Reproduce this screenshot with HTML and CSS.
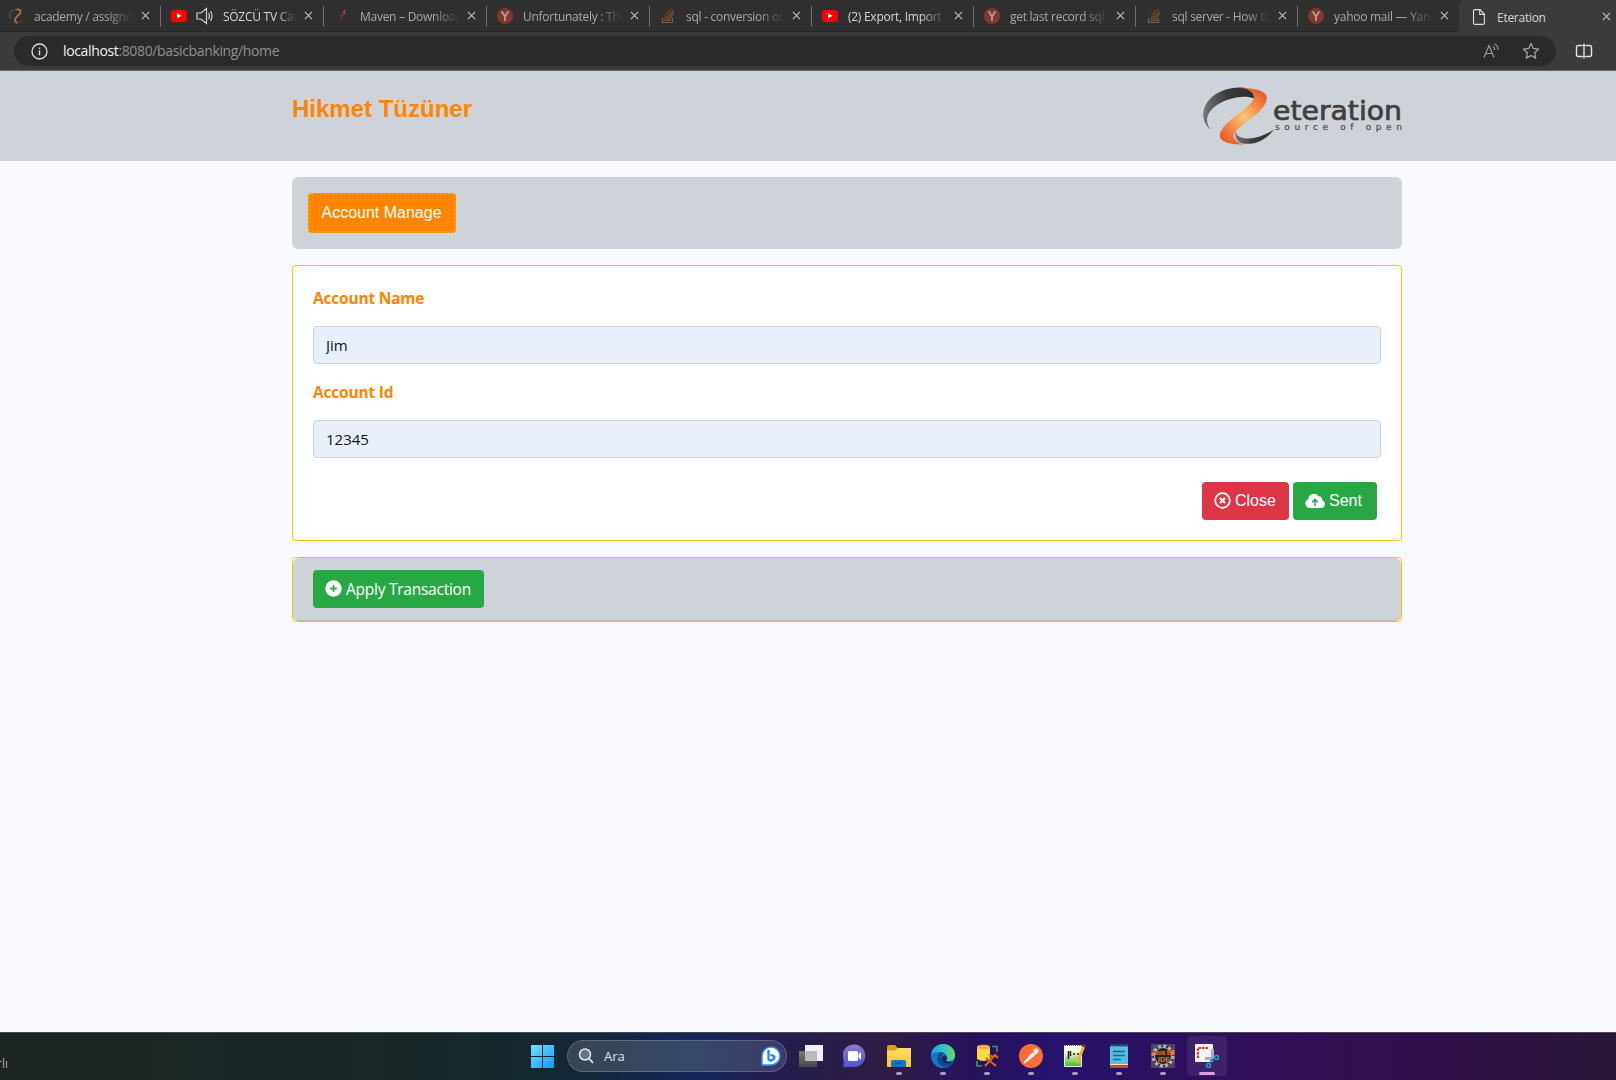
FILE: index.html
```html
<!DOCTYPE html>
<html lang="tr">
<head>
<meta charset="utf-8">
<title>Eteration</title>
<link rel="stylesheet" href="styles.css">
</head>
<body>
<svg class="defs" width="0" height="0" aria-hidden="true">
  <defs>
    <symbol id="close" viewBox="0 0 10 10"><path d="M1 1l8 8M9 1L1 9" fill="none" stroke="#c4c4c4" stroke-width="1.2"/></symbol>
    <symbol id="youtube" viewBox="0 0 16 16"><rect y="2" width="16" height="12" rx="3" fill="#f00"/><path d="M6 5.300v5l4.600-2.500z" fill="#fff"/></symbol>
    <symbol id="yandex" viewBox="0 0 16 16"><circle cx="8" cy="8" r="8" fill="#85352a"/><path d="M4.600 3.200l3.400 5.300v4.600M11.400 3.200L8 8.500" fill="none" stroke="#a89c9a" stroke-width="1.900"/></symbol>
    <symbol id="stack" viewBox="0 0 16 16"><path d="M2.500 10v4.500h10V10" fill="none" stroke="#666" stroke-width="1.200"/><path d="M4 12.500h7M4.100 10.300l6.900.8M4.700 7.700l6.600 2M6 5.100l6 3.600M8.200 2.600l4.600 5M11.500 .8l2 5.500" stroke="#8e4f20" stroke-width="1.100"/></symbol>
  </defs>
</svg>

<div class="browser">
  <div class="tabs">
    <div class="tab">
      <svg class="fav" viewBox="0 0 16 16"><path d="M10 1.500C3 1 0 5 2.500 10.500" fill="none" stroke="#505050" stroke-width="1.300"/><path d="M8.500 1.500C14 1 13.500 4.500 10 7.500 6.500 10.500 5.500 13 9.500 15" fill="none" stroke="#a96a47" stroke-width="2"/><path d="M9 14.800q4 0 6-2.500" fill="none" stroke="#4a4a4a"/></svg>
      <span class="title">academy / assignment</span><svg class="x"><use href="#close"/></svg>
    </div>
    <div class="tab bright">
      <svg class="fav"><use href="#youtube"/></svg>
      <svg class="speaker" viewBox="0 0 17 18"><path d="M1 6h4l5.500-4.500v15L5 12H1zM12.500 6q1.800 3 0 6M14.500 4q3 5 0 10" fill="none" stroke="#d0d0d0" stroke-width="1.200"/></svg>
      <span class="title">SÖZCÜ TV Canlı</span><svg class="x"><use href="#close"/></svg>
    </div>
    <div class="tab">
      <svg class="fav" viewBox="0 0 16 16"><path d="M5.300 13Q6 6 10.500 1.500 13 0 11.500 4 10 8.500 5.300 13" fill="#7a2342"/><path d="M8.500 4q2-2.500 3.800-3-.2 3-2 6z" fill="#99442c"/></svg>
      <span class="title">Maven – Download</span><svg class="x"><use href="#close"/></svg>
    </div>
    <div class="tab"><svg class="fav"><use href="#yandex"/></svg><span class="title">Unfortunately : The</span><svg class="x"><use href="#close"/></svg></div>
    <div class="tab"><svg class="fav"><use href="#stack"/></svg><span class="title">sql - conversion of a</span><svg class="x"><use href="#close"/></svg></div>
    <div class="tab bright"><svg class="fav"><use href="#youtube"/></svg><span class="title">(2) Export, Import &amp;</span><svg class="x"><use href="#close"/></svg></div>
    <div class="tab"><svg class="fav"><use href="#yandex"/></svg><span class="title">get last record sql</span><svg class="x"><use href="#close"/></svg></div>
    <div class="tab"><svg class="fav"><use href="#stack"/></svg><span class="title">sql server - How to</span><svg class="x"><use href="#close"/></svg></div>
    <div class="tab"><svg class="fav"><use href="#yandex"/></svg><span class="title">yahoo mail — Yandex</span><svg class="x"><use href="#close"/></svg></div>
    <div class="tab active">
      <svg class="fav" viewBox="0 0 16 16"><path d="M4 .6h5l4.400 4.400v8.900q0 1.500-1.500 1.500H4q-1.500 0-1.500-1.500V2.100Q2.500.6 4 .6zM8.700.8v4.600h4.500" fill="none" stroke="#ddd" stroke-width="1.100"/></svg>
      <span class="title">Eteration</span><svg class="x"><use href="#close"/></svg>
    </div>
  </div>
  <div class="toolbar">
    <div class="address">
      <svg width="17" height="17" viewBox="0 0 17 17"><circle cx="8.500" cy="8.500" r="7.500" fill="none" stroke="#ddd" stroke-width="1.300"/><path d="M8.500 7.300v5M8.500 4.500v1.400" stroke="#ddd" stroke-width="1.400"/></svg>
      <span class="url"><b>localhost</b>:8080/basicbanking/home</span>
      <svg class="aloud" width="17" height="16" viewBox="0 0 17 16"><path d="M1 14.500L6 2.500l5 12M2.800 10.500h6.500M9.800 3.500q2 1.200 2 3.500M11.300.8q4 2 3.600 6.200" fill="none" stroke="#999" stroke-width="1.200"/></svg>
      <svg width="18" height="18" viewBox="0 0 18 18"><path d="M9 1.500l2.300 4.900 5.300.7-3.900 3.700 1 5.300L9 13.500l-4.700 2.600 1-5.300L1.400 7.100l5.300-.7z" fill="none" stroke="#aaa" stroke-width="1.200" stroke-linejoin="round"/></svg>
    </div>
    <svg class="split" width="18" height="16" viewBox="0 0 18 16"><path d="M7 2.500H3.500Q1.500 2.500 1.500 4.500v7q0 2 2 2H7M11 2.500h3.500q2 0 2 2v7q0 2-2 2H11M9 .5v15" fill="none" stroke="#e4e4e4" stroke-width="1.400"/><path d="M7.200 2.500h3.600M7.200 13.500h3.600" stroke="#e4e4e4"/></svg>
  </div>
</div>

<main class="page">
  <header class="banner">
    <div class="container banner-row">
      <h1>Hikmet Tüzüner</h1>
      <svg class="logo" width="200" height="58" viewBox="0 0 200 58">
        <defs>
          <linearGradient id="dark" x1="0" x2="1"><stop offset="0" stop-color="#777"/><stop offset=".45" stop-color="#3c3b3d"/><stop offset="1" stop-color="#2c2a2c"/></linearGradient>
          <radialGradient id="flame" gradientUnits="userSpaceOnUse" cx="42" cy="30" r="30"><stop offset="0" stop-color="#fdca7a"/><stop offset=".5" stop-color="#f5904c"/><stop offset="1" stop-color="#e95d2b"/></radialGradient>
        </defs>
        <path d="M8.500 43C-2 33-1 19 11 9 24-1 46-2 51 5q1.500 2.500 1 6.500C43 7 22 11 11 21 3 29 4 36 8.500 43z" fill="url(#dark)"/>
        <path d="M39 1C58 1 68 6 64 15 60 25 49 31 38 40q-8 6-6 11 2 4 10 6.500C24 58 14 53 19 44 24 34 37 28 46 19q8-7 5-12Q48 2 39 1z" fill="url(#flame)"/>
        <path d="M34 43q-1 6 7 8c9 2 21-2 31-8.500C63 54 50 59 39 56q-8-4-5-13z" fill="url(#dark)"/>
        <text class="wordmark" x="71" y="33" textLength="129" lengthAdjust="spacingAndGlyphs">eteration</text>
        <text class="tagline" x="73" y="42.500" textLength="127">source of open</text>
      </svg>
    </div>
  </header>

  <div class="container">
    <nav class="menu"><button class="manage">Account Manage</button></nav>

    <form class="panel">
      <label for="name">Account Name</label>
      <input id="name" value="Jim">
      <label for="acc">Account Id</label>
      <input id="acc" value="12345">
      <div class="actions">
        <button type="button" class="btn red"><svg width="17" height="17" viewBox="0 0 17 17"><circle cx="8.500" cy="8.500" r="7.300" fill="none" stroke="#fff" stroke-width="1.800"/><path d="M6 6l5 5M11 6l-5 5" stroke="#fff" stroke-width="2"/></svg>Close</button>
        <button type="button" class="btn green"><svg width="20" height="16" viewBox="0 0 20 16"><path d="M5 15a4.500 4.500 0 0 1-1.700-8.700A5.600 5.600 0 0 1 13.500 3.200a3.200 3.200 0 0 1 3.600 4A4 4 0 0 1 16 15z" fill="#fff"/><path d="M10 13V7M7.200 9.200L10 6.400l2.800 2.800" fill="none" stroke="#28a745" stroke-width="1.500"/></svg>Sent</button>
      </div>
    </form>

    <section class="apply">
      <div class="apply-body">
        <button class="btn green segoe"><svg width="17" height="17" viewBox="0 0 17 17"><circle cx="8.500" cy="8.500" r="8.200" fill="#fff"/><path d="M8.500 5.300v6.400M5.300 8.500h6.400" stroke="#28a745" stroke-width="1.800"/></svg><span>Apply Transaction</span></button>
      </div>
    </section>
  </div>
</main>

<footer class="taskbar">
  <span class="weather">rlı</span>
  <svg class="start" width="23" height="23" viewBox="0 0 23 23"><defs><linearGradient id="win" x1="0" y1="0" x2="1" y2="1"><stop stop-color="#7bdcff"/><stop offset="1" stop-color="#0f9cfb"/></linearGradient></defs><path d="M0 0h11v11H0zM12 0h11v11H12zM0 12h11v11H0zM12 12h11v11H12z" fill="url(#win)"/></svg>
  <div class="search">
    <svg width="16" height="16" viewBox="0 0 16 16"><circle cx="7" cy="6.500" r="5.500" fill="#64748b" stroke="#e6e9ed" stroke-width="1.500"/><path d="M11 10.500l4 4.300" stroke="#e6e9ed" stroke-width="1.700"/></svg>
    <span>Ara</span>
    <svg width="20" height="20" viewBox="0 0 20 20"><path d="M1 19V10a9 9 0 1 1 9 9z" fill="#fff" stroke="#2593ec" stroke-width="1.500"/><path d="M7.500 4v9.500l2.200 1.200 3.600-2.200v-2L9.500 8.700" fill="none" stroke="#168ce2" stroke-width="2.300"/></svg>
  </div>
  <div class="apps">
    <div class="app"><svg viewBox="0 0 24 24"><defs><linearGradient id="tv" x2="0" y2="1"><stop stop-color="#777"/><stop offset="1" stop-color="#484848"/></linearGradient></defs><path d="M6 1h18v16H6z" fill="#f0f0f0"/><path d="M0 7h18v16H0z" fill="url(#tv)"/><path d="M6 7h12v10H6z" fill="#bbb"/></svg></div>
    <div class="app"><svg viewBox="0 0 24 24"><defs><linearGradient id="chat" x2="0" y2="1"><stop stop-color="#8e7bc7"/><stop offset="1" stop-color="#4e55ce"/></linearGradient></defs><path d="M0 23l1-6A11.300 11.300 0 1 1 11 23z" fill="url(#chat)"/><rect x="5" y="7" width="10" height="10" rx="1.500" fill="#fff"/><path d="M15.500 10.500L18 8v8l-2.500-2.500z" fill="#fff"/></svg></div>
    <div class="app run"><svg viewBox="0 0 24 24"><defs><linearGradient id="fold" x2="0" y2="1"><stop stop-color="#ffdc6a"/><stop offset="1" stop-color="#fcc22e"/></linearGradient></defs><path d="M0 3q0-2 2-2h6l2.500 3H23v6H0z" fill="#dba008"/><path d="M0 6.500h8L11 4h13v19H0z" fill="url(#fold)"/><path d="M4 23v-5q0-2 2-2h11q2 0 2 2v5z" fill="#1377c5"/><path d="M8 19h7" stroke="#0b5a9e" stroke-width="1.500"/></svg></div>
    <div class="app run"><svg viewBox="0 0 24 24"><defs><linearGradient id="edge1"><stop stop-color="#249fe0"/><stop offset=".6" stop-color="#34c7c2"/><stop offset="1" stop-color="#69dc5b"/></linearGradient></defs><circle cx="12" cy="12" r="12" fill="#1476c7"/><path d="M0 11C1 4 6 0 12 0c8 0 12 6 12 11s-4 6-7 6-3-2-2-3c1-3-1-6-6-6-4 0-8 1-9 3z" fill="url(#edge1)"/><path d="M10 8c-4 2-5 9-1 13 3 3 9 2 13-2-5 2-12 0-11-7 0-2 1-2 2-3z" fill="#0d4b93"/><path d="M15 11q3 6-1 5 5 4 9.500 0-2 3-4 3.500-8 1-8.500-5 0-3 4-3.500z" fill="#26205f"/></svg></div>
    <div class="app run"><svg viewBox="0 0 24 24"><path d="M17 2.500h5V8M2 17v5h5" fill="none" stroke="#3f9a52" stroke-width="1.700"/><path d="M2 3v12q6 4 13 0V3z" fill="#f8d946"/><ellipse cx="8.500" cy="3" rx="6.500" ry="2.300" fill="#f4a958"/><path d="M10 22l9-10M11 14l10 8M14 11l4 2 2-2 3 3" fill="none" stroke="#d8651c" stroke-width="2.200"/></svg></div>
    <div class="app run"><svg viewBox="0 0 24 24"><circle cx="12" cy="12" r="12" fill="#ff6c37"/><path d="M5 19l5-4 7-6M6 18l8-9" stroke="#fff" stroke-width="1.700" fill="none"/><circle cx="17" cy="7" r="2.500" fill="#fff"/></svg></div>
    <div class="app run"><svg viewBox="0 0 24 24"><defs><linearGradient id="npp" x2="0" y2="1"><stop offset=".3" stop-color="#f4f8dc"/><stop offset="1" stop-color="#48b81d"/></linearGradient></defs><path d="M1.500 1.500h17v21h-17z" fill="url(#npp)" stroke="#eee"/><path d="M2 1.500h17" stroke="#555" stroke-dasharray="1 1"/><path d="M5.500 7v8M7.500 7v5M10 10h2M14 10h2" stroke="#222" stroke-width="1.500"/><path d="M14 19l7-17" stroke="#edb13a" stroke-width="3"/><path d="M20.500 3l1-2.500" stroke="#863326" stroke-width="3"/></svg></div>
    <div class="app run"><svg viewBox="0 0 24 24"><path d="M3 2h18v19H3z" fill="#54bfdd"/><path d="M3 21h18v3H3z" fill="#b35a18"/><path d="M3 20.500h18" stroke="#f0e4cf"/><path d="M5 0v3M8 0v3M11 0v3M14 0v3M17 0v3M20 0v3" stroke="#1b759e" stroke-width="1.300"/><path d="M6 7.500h12M6 11.500h12M6 15.500h8" stroke="#146990" stroke-width="1.500"/></svg></div>
    <div class="app run"><svg viewBox="0 0 24 24"><path d="M0 0h24v24H0z" fill="#514263"/><circle cx="12" cy="12" r="10" fill="#26231f" stroke="#b5b2b2" stroke-width="3" stroke-dasharray="3 2.230"/><circle cx="12" cy="12" r="8.500" fill="#222" stroke="#b5b2b2"/><text class="java" x="0" y="11" textLength="24" lengthAdjust="spacingAndGlyphs">Java EE</text><text class="java" x="7" y="18">IDE</text></svg></div>
    <div class="app run current"><svg viewBox="0 0 24 24"><rect width="18" height="18" rx="1" fill="#f4f1f4"/><path d="M3 14V4h10" fill="none" stroke="#cb3c1c" stroke-width="2.200" stroke-dasharray="2.500 1"/><path d="M10 14.500h7.500V5" fill="none" stroke="#a8adb3" stroke-width="3"/><circle cx="21.500" cy="13.500" r="2" fill="none" stroke="#269be4" stroke-width="1.500"/><circle cx="13.500" cy="21.500" r="2" fill="none" stroke="#269be4" stroke-width="1.500"/><path d="M19.500 14.500L17 16l-2.500 3.500" stroke="#1777be" stroke-width="1.700" fill="none"/></svg></div>
  </div>
</footer>
</body>
</html>
```
FILE: styles.css
```css
* { box-sizing: border-box; }
body {
  margin: 0;
  height: 1080px;
  display: flex;
  flex-direction: column;
  overflow: hidden;
  background: #f8f9ff;
  font-family: "Open Sans", "Noto Sans", sans-serif;
}
svg { flex: none; }
.defs { position: absolute; }

.browser {
  height: 71px;
  background: #3b3b3b;
  border-bottom: 1px solid #66666a;
}
.tabs {
  display: flex;
  height: 32px;
  margin-left: -2px;
  background: #2f2f2f;
  border-bottom: 1px solid #282828;
}
.tab {
  position: relative;
  flex: none;
  display: flex;
  align-items: center;
  width: 162px;
  padding-left: 11px;
  color: #a9a9a9;
  font-size: 12px;
}
.tab:nth-child(-n+4) { width: 163px; }
.tab:first-child { width: 162px; padding-left: 10px; }
.tab::before {
  content: "";
  position: absolute;
  left: 0;
  top: 6px;
  width: 1px;
  height: 21px;
  background: #707070;
}
.tab.bright { color: #d6d6d6; }
.tab.active {
  height: 33px;
  padding-left: 12px;
  background: #3b3b3b;
  border-radius: 6px 0 0 0;
  color: #d6d6d6;
}
.tab.active::before { display: none; }
.fav { width: 16px; height: 16px; }
.speaker { width: 17px; height: 18px; margin-left: 9px; }
.title {
  flex: 1;
  margin-left: 10px;
  padding-top: 1px;
  overflow: hidden;
  white-space: nowrap;
  letter-spacing: -0.27px;
  mask-image: linear-gradient(to right, #000 74%, transparent 100%);
}
.active .title { mask-image: none; }
.x { width: 9px; height: 9px; margin: 0 10px 0 8px; }

.toolbar {
  display: flex;
  align-items: center;
  height: 38px;
  padding: 0 23px 0 14px;
  gap: 19px;
}
.address {
  flex: 1;
  display: flex;
  align-items: center;
  height: 30px;
  padding: 0 16px 0 17px;
  border-radius: 15px;
  background: #2a2a2a;
}
.url {
  flex: 1;
  margin-left: 15px;
  padding-bottom: 1px;
  color: #929292;
  font-size: 14px;
  letter-spacing: -0.36px;
}
.url b { color: #f2f2f2; font-weight: 400; }
.aloud { margin-right: 22px; }

.page { flex: 1; }
.container { width: 1110px; margin: 0 auto 0 292px; }
.banner { height: 90px; background: #ced3da; margin-bottom: 16px; }
.banner-row { display: flex; justify-content: space-between; }
h1 {
  margin: 24px 0 0;
  color: #ff8400;
  font: bold 24px/28px "Liberation Sans", sans-serif;
}
.logo { margin-top: 16px; overflow: visible; }
.wordmark { fill: #3d403c; stroke: #3d403c; stroke-width: .7px; font: 26px "DejaVu Sans", sans-serif; }
.tagline { fill: #4a4c4b; stroke: #4a4c4b; stroke-width: .2px; font: 9px "DejaVu Sans", sans-serif; }

button { font: 16px/24px "Liberation Sans", sans-serif; color: #fff; }
.menu {
  padding: 16px;
  height: 72px;
  border-radius: 6px;
  background: #ced3da;
}
.manage {
  display: block;
  width: 148px;
  height: 40px;
  padding: 0 1px 0 0;
  background: #ff8400;
  border: 2px dotted #ffa500;
  border-radius: 4px;
}
.panel {
  height: 276px;
  margin-top: 16px;
  padding: 19px 20px;
  background: #fff;
  border: 1px solid #ffc107;
  border-radius: 4px;
}
label {
  display: block;
  height: 41px;
  color: #ff8400;
  font-size: 15.5px;
  font-weight: 700;
  line-height: 26px;
  letter-spacing: -0.2px;
}
input {
  display: block;
  width: 100%;
  height: 38px;
  margin-bottom: 15px;
  padding: 6px 12px;
  border: 1px solid #ced3da;
  border-radius: 4px;
  background: #e8f0fe;
  color: #111;
  font: 15px/24px "Open Sans", sans-serif;
}
.actions {
  display: flex;
  justify-content: flex-end;
  gap: 4px;
  padding: 9px 4px 0 0;
}
.btn {
  display: flex;
  align-items: center;
  gap: 4px;
  height: 38px;
  padding: 0 0 0 12px;
  border: 0;
  border-radius: 4px;
}
.btn svg { margin-top: -1px; }
.red { width: 87px; background: #dc3545; }
.green { width: 84px; background: #28a745; }
.segoe { width: 171px; font-family: "Open Sans", sans-serif; font-size: 15.5px; letter-spacing: -0.25px; }
.segoe span { white-space: nowrap; }
.apply {
  height: 65px;
  margin-top: 16px;
  background: #fff;
  border: 1px solid #ffc107;
  border-radius: 4px;
}
.apply-body {
  height: 63px;
  padding: 12px 20px;
  border-radius: 6px;
  background: #ced3da;
  border-bottom: 1px solid #b4b8bd;
}

.taskbar {
  display: flex;
  align-items: center;
  height: 48px;
  padding-bottom: 1px;
  border-top: 1px solid #4a4850;
  background: linear-gradient(90deg, #1c2524 0, #1a2626 300px, #14282b 500px, #11283c 600px, #14265a 700px, #251d4d 780px, #2e1c45 890px, #26125b 970px, #27126f 1060px, #2a1060 1140px, #310f58 1250px, #301048 1450px, #2a1738 1616px);
}
.weather {
  display: flex;
  justify-content: flex-end;
  width: 8px;
  padding-top: 15px;
  color: #aaa;
  font-size: 12px;
}
.start { margin-left: 523px; margin-right: 13px; }
.search {
  display: flex;
  align-items: center;
  width: 220px;
  height: 32px;
  padding: 0 5px 0 10px;
  border: 1px solid #ffffff30;
  border-radius: 16px;
  background: linear-gradient(90deg, #354650, #37486b 60%, #3b3968);
  color: #e0e3e8;
  font-size: 13px;
}
.search span { flex: 1; margin-left: 10px; }
.apps { display: flex; margin-left: 2px; }
.app {
  position: relative;
  display: flex;
  justify-content: center;
  width: 44px;
  height: 40px;
  padding-top: 8px;
}
.app svg { width: 24px; height: 24px; }
.app.run::after {
  content: "";
  position: absolute;
  bottom: 1px;
  width: 6px;
  height: 3px;
  border-radius: 2px;
  background: #a79fb5;
}
.app.current {
  width: 40px;
  margin-left: 2px;
  border-radius: 4px;
  background: #ffffff14;
}
.app.current::after { width: 16px; background: #dc9de0; }
.java { fill: #ec771b; font: bold 7px "Liberation Sans", sans-serif; }
```
